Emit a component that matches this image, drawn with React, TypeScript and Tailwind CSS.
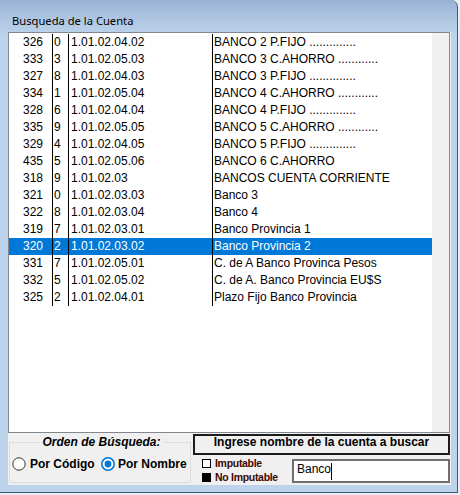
import React from 'react'

const rows = [
  { id: '326', dv: '0', code: '1.01.02.04.02', name: 'BANCO 2 P.FIJO ..............' },
  { id: '333', dv: '3', code: '1.01.02.05.03', name: 'BANCO 3 C.AHORRO ............' },
  { id: '327', dv: '8', code: '1.01.02.04.03', name: 'BANCO 3 P.FIJO ..............' },
  { id: '334', dv: '1', code: '1.01.02.05.04', name: 'BANCO 4 C.AHORRO ............' },
  { id: '328', dv: '6', code: '1.01.02.04.04', name: 'BANCO 4 P.FIJO ..............' },
  { id: '335', dv: '9', code: '1.01.02.05.05', name: 'BANCO 5 C.AHORRO ............' },
  { id: '329', dv: '4', code: '1.01.02.04.05', name: 'BANCO 5 P.FIJO ..............' },
  { id: '435', dv: '5', code: '1.01.02.05.06', name: 'BANCO 6 C.AHORRO' },
  { id: '318', dv: '9', code: '1.01.02.03', name: 'BANCOS CUENTA CORRIENTE' },
  { id: '321', dv: '0', code: '1.01.02.03.03', name: 'Banco 3' },
  { id: '322', dv: '8', code: '1.01.02.03.04', name: 'Banco 4' },
  { id: '319', dv: '7', code: '1.01.02.03.01', name: 'Banco Provincia 1' },
  { id: '320', dv: '2', code: '1.01.02.03.02', name: 'Banco Provincia 2' },
  { id: '331', dv: '7', code: '1.01.02.05.01', name: 'C. de A Banco Provinca Pesos' },
  { id: '332', dv: '5', code: '1.01.02.05.02', name: 'C. de A. Banco Provincia EU$S' },
  { id: '325', dv: '2', code: '1.01.02.04.01', name: 'Plazo Fijo Banco Provincia' }
]

const selected = 12

function Radio({ checked }: { checked?: boolean }) {
  return (
    <svg width="14" height="14" viewBox="0 0 14 14" className="shrink-0">
      {checked ? (
        <>
          <circle cx="7" cy="7" r="6.2" fill="#fff" stroke="#0078d7" strokeWidth="1.6" />
          <circle cx="7" cy="7" r="3.4" fill="#0078d7" />
        </>
      ) : (
        <circle cx="7" cy="7" r="6.2" fill="#fff" stroke="#333" strokeWidth="1" />
      )}
    </svg>
  )
}

export default function App() {
  return (
    <div className="w-[460px] h-[495px] bg-[#e9eef5] overflow-hidden font-['Liberation_Sans',Arial,sans-serif] text-black">
      <div className="w-[458px] h-[493px] flex flex-col border-r border-b border-[#465a75] rounded-tr-[7px] bg-[linear-gradient(180deg,#98b3d3_0px,#b2c9e4_22px,#bcd3eb_36px,#bcd3eb_100%)]">
        <div className="h-[32px] pl-[12px] pt-[12px] leading-[18px] text-[11.2px] font-['Noto_Sans',sans-serif]">
          Busqueda de la Cuenta
        </div>
        <div className="flex h-[453px]">
          <div className="w-[8px]" />
          <div className="w-[443px] bg-[#f0f0f0] flex flex-col">
            {/* lista */}
            <div className="w-[442px] h-[401px] border border-[#828790] flex">
              <div className="w-[423px] bg-white pt-[1px] text-[12px] leading-[17px]">
                {rows.map((r, i) => (
                  <div
                    key={r.id}
                    className={
                      i === selected
                        ? 'flex h-[17px] bg-[#0078d7] text-white'
                        : 'flex h-[17px]'
                    }
                  >
                    <div className="w-[44px] pr-[9px] text-right border-r border-black">{r.id}</div>
                    <div className="w-[16px] pl-[1px] border-r border-black">{r.dv}</div>
                    <div className="w-[144px] pl-[2px] border-r border-black">{r.code}</div>
                    <div className="flex-1 pl-[1px] whitespace-nowrap">{r.name}</div>
                  </div>
                ))}
              </div>
              <div className="w-[17px] bg-[#f0f0f0]" />
            </div>

            {/* panel inferior */}
            <div className="flex flex-1">
              <div className="relative ml-[1px] mt-[9px] w-[182px] h-[41px] border border-[#dcdcdc]">
                <div className="absolute left-0 right-0 top-[-9px] flex justify-center pl-[3px]">
                  <span className="bg-[#f0f0f0] px-[2px] text-[12px] leading-[16px] font-bold italic">
                    Orden de Búsqueda:
                  </span>
                </div>
                <div className="flex items-center h-[16px] mt-[13px] pl-[2px] text-[12px] font-bold">
                  <div className="flex items-center w-[89px] gap-[4px]">
                    <Radio />
                    <span>Por Código</span>
                  </div>
                  <div className="flex items-center gap-[3px]">
                    <Radio checked />
                    <span>Por Nombre</span>
                  </div>
                </div>
              </div>

              <div className="ml-[2px] mt-[1px] w-[257px] flex flex-col">
                <div className="h-[21px] border-2 border-[#1c1c1c] flex justify-center text-[12px] leading-[12px] font-bold">
                  Ingrese nombre de la cuenta a buscar
                </div>
                <div className="flex mt-[4px]">
                  <div className="w-[99px] pl-[9px] flex flex-col gap-[5px] text-[10.5px] leading-[9px] font-bold tracking-[-0.3px] text-[#3d0800]">
                    <div className="h-[9px] flex items-center gap-[4px]">
                      <span className="w-[9px] h-[9px] border border-black bg-white" />
                      <span>Imputable</span>
                    </div>
                    <div className="h-[9px] flex items-center gap-[4px]">
                      <span className="w-[9px] h-[9px] border border-black bg-black" />
                      <span>No Imputable</span>
                    </div>
                  </div>
                  <div className="w-[158px] h-[24px] border-2 border-[#6f6f6f] bg-white pl-[3px] flex items-start text-[12px]">
                    <span className="leading-[16px]">Banco</span>
                    <span className="w-px h-[17px] mt-[2px] bg-black" />
                  </div>
                </div>
              </div>
            </div>
          </div>
        </div>
      </div>
    </div>
  )
}
